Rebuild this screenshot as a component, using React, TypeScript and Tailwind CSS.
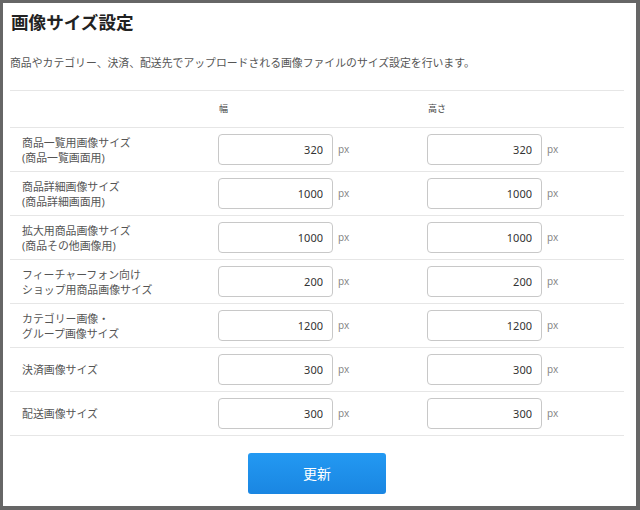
const rows = [
  { label: ['商品一覧用画像サイズ', '(商品一覧画面用)'], w: 320, h: 320 },
  { label: ['商品詳細画像サイズ', '(商品詳細画面用)'], w: 1000, h: 1000 },
  { label: ['拡大用商品画像サイズ', '(商品その他画像用)'], w: 1000, h: 1000 },
  { label: ['フィーチャーフォン向け', 'ショップ用商品画像サイズ'], w: 200, h: 200 },
  { label: ['カテゴリー画像・', 'グループ画像サイズ'], w: 1200, h: 1200 },
  { label: ['決済画像サイズ'], w: 300, h: 300 },
  { label: ['配送画像サイズ'], w: 300, h: 300 },
];

const SizeInput = ({ value }: { value: number }) => (
  <div className="flex items-center">
    <input
      defaultValue={value}
      className="w-[115px] h-[31px] rounded-[4px] border border-[#c8c8c8] bg-white pr-[9px] text-right text-[11px] text-[#333] outline-none"
    />
    <span className="ml-[5px] text-[10px] text-[#888]">px</span>
  </div>
);

const App = () => {
  return (
    <div className="h-[510px] w-[640px] bg-[#666] pt-[3px] pl-[3px] pr-[4px] pb-[4px] font-['Noto_Sans','Noto_Sans_CJK_JP',sans-serif]">
      <div className="h-full bg-white px-[7px] pt-[7px]">
        <h1 className="pl-[1px] text-[17.6px] font-bold leading-[24px] text-[#222]">画像サイズ設定</h1>
        <p className="mt-[21px] text-[10.85px] leading-[16px] text-[#555]">
          商品やカテゴリー、決済、配送先でアップロードされる画像ファイルのサイズ設定を行います。
        </p>

        <div className="mt-[19px] w-[614px] border-t border-[#e6e6e6]">
          {/* header */}
          <div className="grid h-[37px] grid-cols-[208px_209px_1fr] items-center border-b border-[#e6e6e6] text-[9px] text-[#444]">
            <div></div>
            <div className="pl-[1px]">幅</div>
            <div className="pl-[1px]">高さ</div>
          </div>

          {rows.map((row, i) => (
            <div
              key={i}
              className="grid h-[44px] grid-cols-[208px_209px_1fr] items-center border-b border-[#e6e6e6]"
            >
              <div className="pl-[12px] text-[10.9px] leading-[15px] text-[#555]">
                {row.label.map((l, j) => (
                  <div key={j}>{l}</div>
                ))}
              </div>
              <SizeInput value={row.w} />
              <SizeInput value={row.h} />
            </div>
          ))}
        </div>

        <div className="mt-[17px] flex w-[614px] justify-center">
          <button className="h-[41px] w-[138px] rounded-[3px] bg-gradient-to-b from-[#2399f2] to-[#1a86e2] text-[14px] text-white">
            更新
          </button>
        </div>
      </div>
    </div>
  );
};

export default App;
